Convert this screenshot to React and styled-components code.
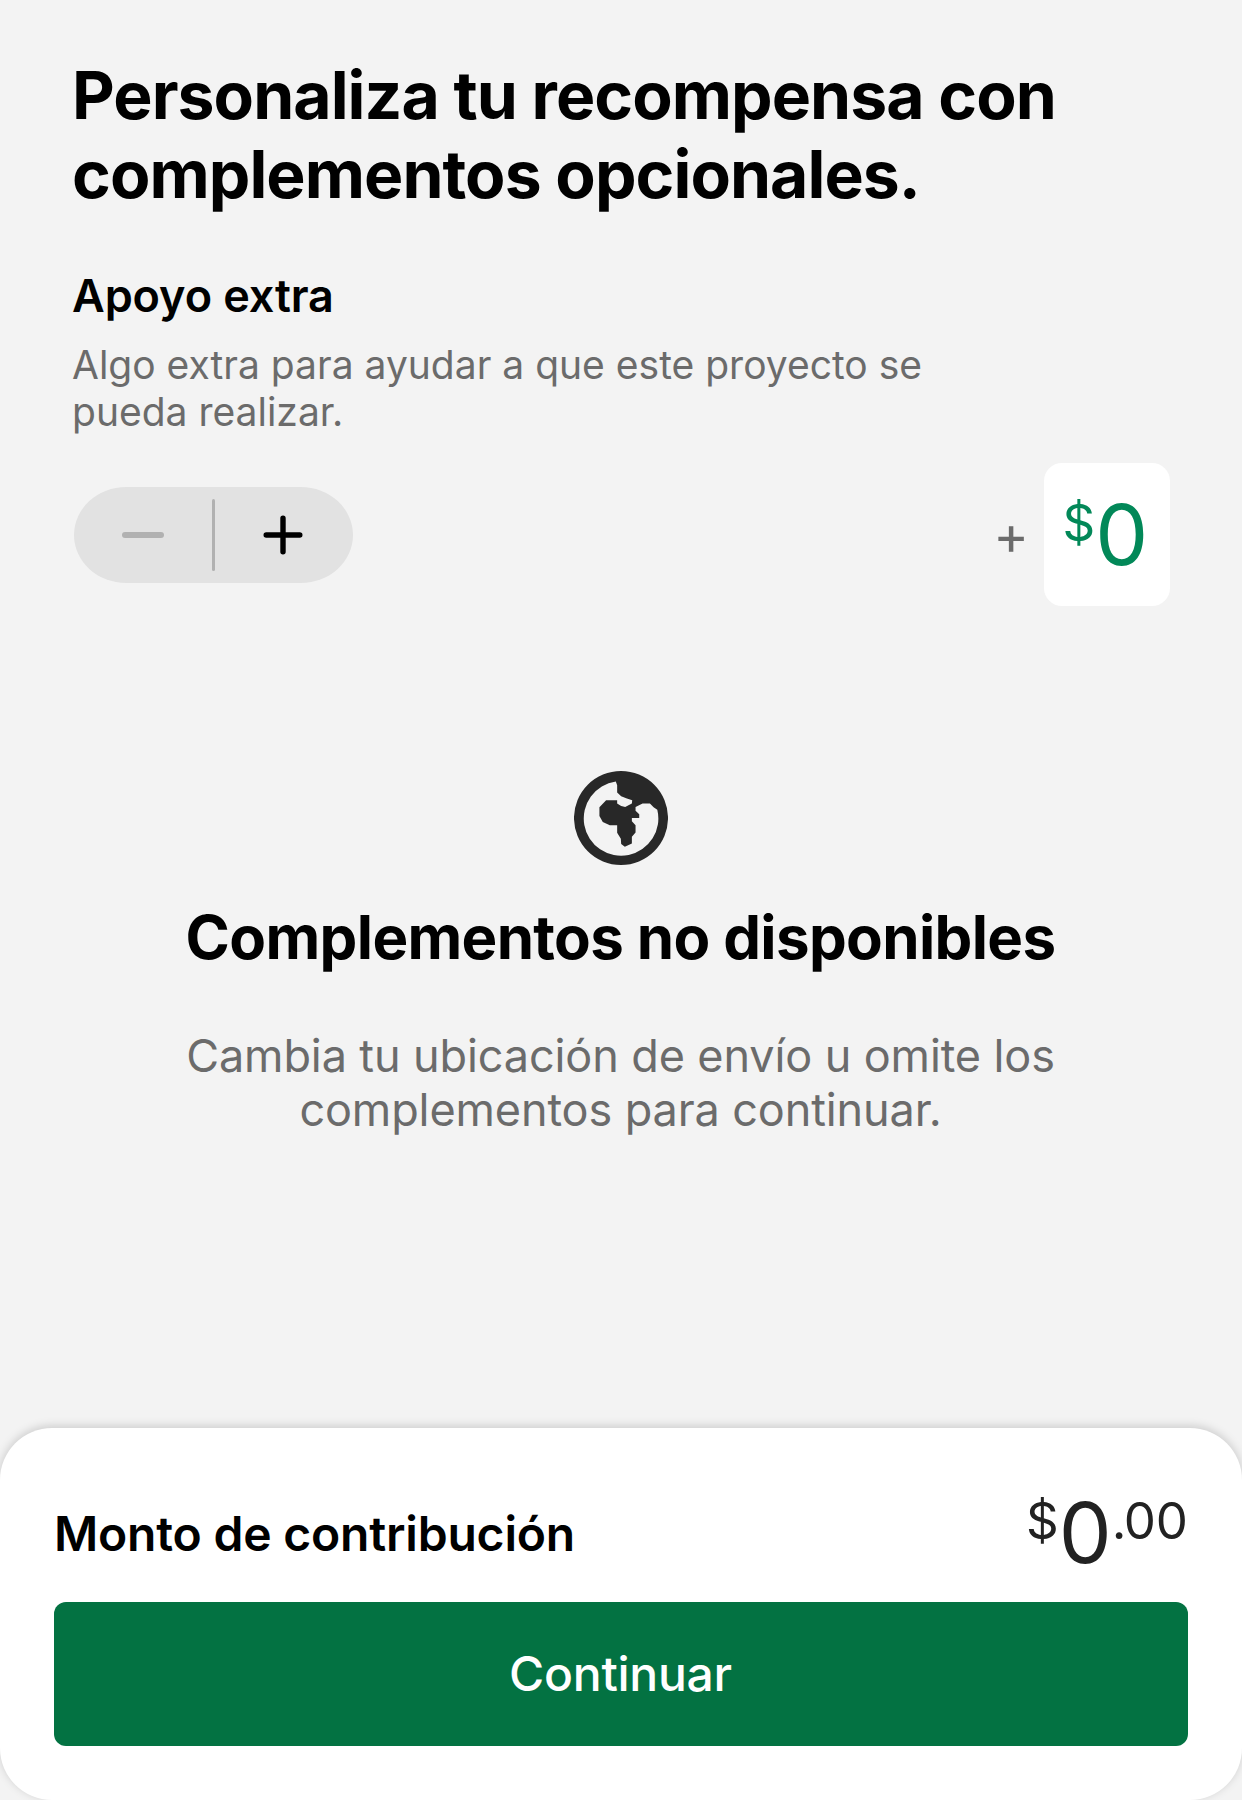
import React from "react";
import styled, { createGlobalStyle } from "styled-components";

const GlobalStyle = createGlobalStyle`
  *, *::before, *::after { box-sizing: border-box; }
  body {
    margin: 0;
    background: #f3f3f3;
    font-family: Inter, "Liberation Sans", sans-serif;
    color: #000;
  }
`;

const Screen = styled.main`
  display: flex;
  flex-direction: column;
  height: 1800px;
  overflow: hidden;
`;

const Content = styled.div`
  display: flex;
  flex-direction: column;
  padding: 56px 72px 0;
`;

const Title = styled.h1`
  margin: 0;
  max-width: 1020px;
  font-size: 66px;
  font-weight: 700;
  line-height: 79px;
  letter-spacing: -0.94px;
`;

const SectionTitle = styled.h2`
  margin: 55px 0 0;
  font-size: 45px;
  font-weight: 600;
  line-height: 54px;
  letter-spacing: -0.1px;
`;

const Description = styled.p`
  margin: 18px 0 0;
  max-width: 900px;
  font-size: 39px;
  line-height: 47px;
  color: #6b6b6b;
`;

const BonusRow = styled.div`
  display: flex;
  align-items: center;
  margin-top: 28px;
  height: 143px;
`;

const Stepper = styled.div`
  display: flex;
  align-items: center;
  width: 279px;
  height: 96px;
  margin: 1px auto 0 2px;
  border-radius: 52px / 48px;
  background: #e2e2e2;
`;

const StepButton = styled.button`
  display: flex;
  flex: none;
  align-items: center;
  justify-content: center;
  width: 138px;
  height: 100%;
  padding: 0 ${(p) => p.$nudge || 0}px 0 0;
  border: 0;
  background: none;
  color: ${(p) => (p.disabled ? "#b1b1b1" : "#000")};
`;

const StepDivider = styled.span`
  width: 3px;
  height: 72px;
  border-radius: 1.5px;
  background: #b1b1b1;
`;

const PlusSign = styled.span`
  margin: 1px 15px 0 0;
  font-size: 54px;
  line-height: 62px;
  color: #6b6b6b;
`;

const AmountBox = styled.div`
  display: flex;
  align-items: center;
  width: 126px;
  height: 143px;
  padding-left: 18.5px;
  border-radius: 18px;
  background: #fff;
`;

const Amount = styled.span`
  font-size: 84px;
  line-height: 102px;
  white-space: nowrap;
  color: ${(p) => p.$color};
`;

const Raised = styled.span`
  font-size: 51px;
  line-height: 0;
  vertical-align: 24.5px;
`;

const DecimalPoint = styled.span`
  letter-spacing: -2.8px;
`;

const EmptyState = styled.section`
  display: flex;
  flex-direction: column;
  align-items: center;
  padding-top: 165px;
  text-align: center;
`;

const Globe = styled.svg`
  display: block;
  width: 94px;
  height: 94px;
`;

const EmptyTitle = styled.h2`
  margin: 36px 0 0;
  padding-right: 1px;
  font-size: 60px;
  font-weight: 700;
  line-height: 72px;
  letter-spacing: -0.65px;
`;

const EmptyText = styled.p`
  margin: 56px 0 0;
  padding-right: 1px;
  max-width: 900px;
  font-size: 45px;
  line-height: 54px;
  letter-spacing: -0.11px;
  color: #6b6b6b;
`;

const Sheet = styled.footer`
  display: flex;
  flex-direction: column;
  height: 372px;
  margin-top: auto;
  padding: 54px 54px 54px;
  border-radius: 52px;
  background: #fff;
  box-shadow: 0 -2px 10px rgba(0, 0, 0, 0.17);
`;

const TotalRow = styled.div`
  display: flex;
  align-items: center;
  justify-content: space-between;
  height: 102px;
`;

const TotalLabel = styled.span`
  padding-top: 1px;
  font-size: 48px;
  font-weight: 600;
  line-height: 58px;
  letter-spacing: -0.2px;
`;

const ContinueButton = styled.button`
  width: 100%;
  height: 144px;
  margin-top: 18px;
  padding: 0 1px 0 0;
  border: 0;
  border-radius: 12px;
  background: #037242;
  color: #fff;
  font-family: inherit;
  font-size: 48px;
  font-weight: 500;
  line-height: 58px;
  letter-spacing: -0.25px;
`;

const MinusIcon = () => (
  <svg width="42" height="42" viewBox="0 0 42 42" stroke="currentColor" strokeWidth="6" strokeLinecap="round">
    <path d="M3 21H39" />
  </svg>
);

const PlusIcon = () => (
  <svg width="40" height="40" viewBox="0 0 40 40" stroke="currentColor" strokeWidth="5.4" strokeLinecap="round">
    <path d="M3.2 20H36.8M20 3.2V36.8" />
  </svg>
);

const GlobeIcon = () => (
  <Globe viewBox="42 33.5 281 281" aria-hidden="true">
    <path
      fill="#282828"
      fillRule="evenodd"
      d="M182.5 33.5a140.5 140.5 0 1 1 0 281a140.5 140.5 0 1 1 0-281Z
         M167 65L171 76V98L183 109L198 115L216 121L215 131L195 141L183 138L171 131V121H138L118 142V168L128 186L149 196H171V218L182 236L183 252L194 260L215 250V230L226 217V196L215 184V174H237V163L226 152V141L247 131H269L280 142L291 149A111.5 111.5 0 1 1 167 65Z"
    />
  </Globe>
);

export default function App() {
  return (
    <>
      <GlobalStyle />
      <Screen>
        <Content>
          <Title>Personaliza tu recompensa con complementos opcionales.</Title>
          <SectionTitle>Apoyo extra</SectionTitle>
          <Description>Algo extra para ayudar a que este proyecto se pueda realizar.</Description>
          <BonusRow>
            <Stepper>
              <StepButton disabled aria-label="Disminuir"><MinusIcon /></StepButton>
              <StepDivider />
              <StepButton $nudge={3} aria-label="Aumentar"><PlusIcon /></StepButton>
            </Stepper>
            <PlusSign>+</PlusSign>
            <AmountBox>
              <Amount $color="#028858"><Raised>$</Raised>0</Amount>
            </AmountBox>
          </BonusRow>
          <EmptyState>
            <GlobeIcon />
            <EmptyTitle>Complementos no disponibles</EmptyTitle>
            <EmptyText>Cambia tu ubicación de envío u omite los complementos para continuar.</EmptyText>
          </EmptyState>
        </Content>
        <Sheet>
          <TotalRow>
            <TotalLabel>Monto de contribución</TotalLabel>
            <Amount $color="#222222">
              <Raised>$</Raised>0<Raised><DecimalPoint>.</DecimalPoint>00</Raised>
            </Amount>
          </TotalRow>
          <ContinueButton>Continuar</ContinueButton>
        </Sheet>
      </Screen>
    </>
  );
}
